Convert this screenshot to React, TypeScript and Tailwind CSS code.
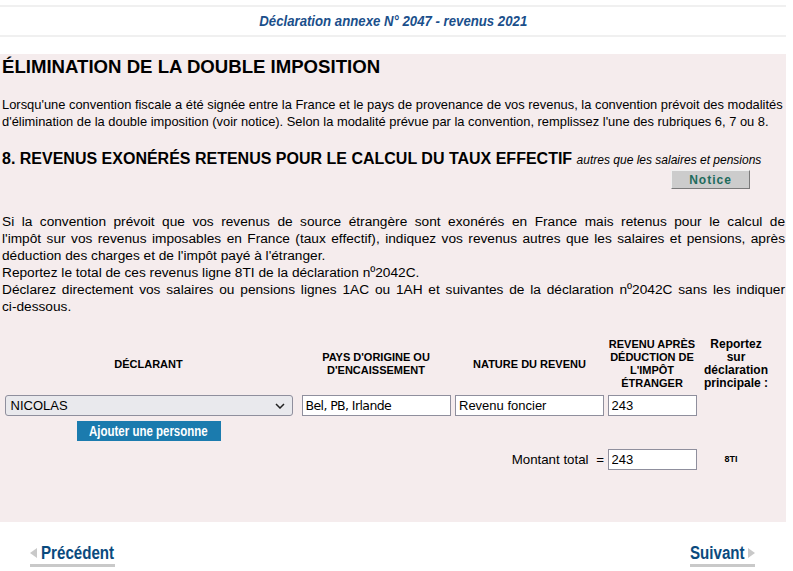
import React from 'react';

const arial = { fontFamily: '"Liberation Sans", Arial, sans-serif' };

function NavLink({ label, dir, w }: { label: string; dir: 'left' | 'right'; w: string }) {
  const tri = (
    <span
      className={`inline-block w-0 h-0 border-y-[5px] border-y-transparent ${
        dir === 'left' ? 'border-r-[7px] border-r-[#c9c9c9] mr-[4px]' : 'border-l-[7px] border-l-[#c9c9c9] ml-[3px]'
      }`}
    />
  );
  return (
    <a href="#" className="inline-flex flex-col">
      <span className="flex items-center">
        {dir === 'left' && tri}
        <span className={`${w} overflow-visible whitespace-nowrap text-[18px] font-bold text-[#0a4a7e] leading-[20px]`}>
          <span className="inline-block origin-left scale-x-[0.84]">{label}</span>
        </span>
        {dir === 'right' && tri}
      </span>
      <span className="mt-[1px] h-[3px] bg-[#c9c9c9]" />
    </a>
  );
}

export default function App() {
  const cols = 'grid grid-cols-[297px_158px_149px_96px_72px]';
  const field = 'h-[21px] border border-[#8f8f9d] bg-white px-[3px] text-[13px] outline-none';
  return (
    <div className="w-[786px] bg-white text-black" style={arial}>
      <div className="pt-[5px]">
        <div className="h-[2px] bg-[#f0f0f0]" />
        <div className="h-[28px] flex items-center justify-center">
          <span className="inline-block origin-center scale-x-[0.88] whitespace-nowrap text-[15px] italic font-bold text-[#1a4f8b]">
            Déclaration annexe N° 2047 - revenus 2021
          </span>
        </div>
        <div className="h-[2px] bg-[#f0f0f0]" />
        <div className="h-[17px]" />
      </div>

      <div className="bg-[#f5eced] pl-[2px] pb-[52px]">
        <h1 className="text-[18.6px] font-bold leading-[26px]">ÉLIMINATION DE LA DOUBLE IMPOSITION</h1>
        <div className="mt-[16px] text-[12.9px] leading-[17px] whitespace-nowrap">
          <p>Lorsqu'une convention fiscale a été signée entre la France et le pays de provenance de vos revenus, la convention prévoit des modalités</p>
          <p>d'élimination de la double imposition (voir notice). Selon la modalité prévue par la convention, remplissez l'une des rubriques 6, 7 ou 8.</p>
        </div>
        <h2 className="mt-[19px] text-[16px] font-bold leading-[20px] whitespace-nowrap">
          8. REVENUS EXONÉRÉS RETENUS POUR LE CALCUL DU TAUX EFFECTIF{' '}
          <span className="text-[12px] font-normal italic">autres que les salaires et pensions</span>
        </h2>
        <div className="flex justify-end pr-[36px]">
          <button className="w-[79px] h-[19px] bg-[#cccccc] border border-t-[#f0f0f0] border-l-[#f0f0f0] border-r-[#7a7a7a] border-b-[#7a7a7a] text-[12px] font-bold tracking-[1px] text-[#1d6b5c] leading-none">
            Notice
          </button>
        </div>
        <div className="mt-[24px] pr-[1px] text-[13.7px] leading-[17px] whitespace-nowrap">
          <p className="text-justify [text-align-last:justify]">
            Si la convention prévoit que vos revenus de source étrangère sont exonérés en France mais retenus pour le calcul de
          </p>
          <p className="text-justify [text-align-last:justify]">
            l'impôt sur vos revenus imposables en France (taux effectif), indiquez vos revenus autres que les salaires et pensions, après
          </p>
          <p>déduction des charges et de l'impôt payé à l'étranger.</p>
          <p>Reportez le total de ces revenus ligne 8TI de la déclaration nº2042C.</p>
          <p className="text-justify [text-align-last:justify]">
            Déclarez directement vos salaires ou pensions lignes 1AC ou 1AH et suivantes de la déclaration nº2042C sans les indiquer
          </p>
          <p>ci-dessous.</p>
        </div>

        <div className="mt-[22px] -ml-[2px]">
          <div className={`${cols} items-center text-center h-[54px]`}>
            <div className="text-[11px] font-bold leading-[13px]">DÉCLARANT</div>
            <div className="text-[11px] font-bold leading-[13px]">PAYS D'ORIGINE OU<br />D'ENCAISSEMENT</div>
            <div className="text-[11px] font-bold leading-[13px]">NATURE DU REVENU</div>
            <div className="text-[11px] font-bold leading-[13px]">REVENU APRÈS DÉDUCTION DE L'IMPÔT ÉTRANGER</div>
            <div className="text-[12px] font-bold leading-[13px]">Reportez sur déclaration principale :</div>
          </div>
          <div className={`${cols} items-center mt-[4px]`}>
            <div className="flex justify-center">
              <div className="w-[288px] h-[21px] rounded-[3px] border border-[#8f8f9d] bg-[#e9e9ed] flex items-center justify-between pl-[5px] pr-[7px] text-[13px]">
                <span>NICOLAS</span>
                <svg width="10" height="6" viewBox="0 0 10 6" fill="none" stroke="#222" strokeWidth="1.5">
                  <path d="M1 1l4 4 4-4" />
                </svg>
              </div>
            </div>
            <div className="flex justify-center">
              <input
                readOnly
                value="Bel, PB, Irlande"
                className={`w-[149px] ${field}`}
                style={{ fontFamily: '"DejaVu Sans", Verdana, sans-serif', fontSize: '12.5px', letterSpacing: '-0.6px' }}
              />
            </div>
            <div className="flex justify-center">
              <input readOnly value="Revenu foncier" className={`w-[149px] ${field}`} />
            </div>
            <div className="flex justify-center">
              <input readOnly value="243" className={`w-[89px] ${field}`} />
            </div>
            <div />
          </div>
          <div className={`${cols} mt-[5px]`}>
            <div className="flex justify-center">
              <button className="w-[144px] h-[20px] bg-[#1b7bae] text-white text-[14px] font-bold leading-none flex items-center justify-center overflow-hidden">
                <span className="inline-block whitespace-nowrap origin-center scale-x-[0.82]">Ajouter une personne</span>
              </button>
            </div>
          </div>
          <div className={`${cols} items-center mt-[8px]`}>
            <div className="col-span-3 text-right text-[13.3px]">
              Montant total <span className="ml-[4px]">=</span>
            </div>
            <div className="flex justify-center">
              <input readOnly value="243" className={`w-[89px] ${field}`} />
            </div>
            <div className="text-[9px] font-bold text-center pr-[10px]">8TI</div>
          </div>
        </div>
      </div>

      <div className="flex justify-between pl-[30px] pr-[31px] pt-[21px] pb-[6px]">
        <NavLink label="Précédent" dir="left" w="w-[74px]" />
        <NavLink label="Suivant" dir="right" w="w-[55px]" />
      </div>
    </div>
  );
}
